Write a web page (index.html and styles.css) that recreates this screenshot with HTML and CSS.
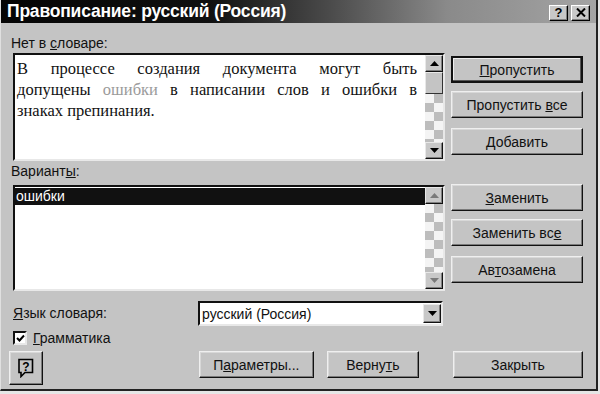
FILE: index.html
```html
<!DOCTYPE html>
<html lang="ru">
<head>
<meta charset="utf-8">
<title>Правописание</title>
<link rel="stylesheet" href="styles.css">
</head>
<body>
<div class="dialog">
  <div class="titlebar">
    <span class="title">Правописание: русский (Россия)</span>
    <div class="tb-btns">
      <span class="tb-btn">?</span>
      <span class="tb-btn tb-x">
        <svg width="10" height="9" viewBox="0 0 10 9"><path d="M1 0.5 L9 8.5 M9 0.5 L1 8.5" stroke="#000" stroke-width="2"/></svg>
      </span>
    </div>
  </div>
  <div class="body">
    <div class="main">
      <div class="left">
        <div class="label l1">Нет в <u>с</u>ловаре:</div>
        <div class="box textbox">
          <div class="text">
            <span class="line just">В процессе создания документа могут быть</span>
            <span class="line just">допущены <span class="err">ошибки</span> в написании слов и ошибки в</span>
            <span class="line">знаках препинания.</span>
          </div>
          <div class="scroll">
            <div class="sbtn"><svg width="9" height="5" viewBox="0 0 9 5"><path d="M4.5 0 L9 5 L0 5 Z" fill="#000"/></svg></div>
            <div class="thumb"></div>
            <div class="track"></div>
            <div class="sbtn"><svg width="9" height="5" viewBox="0 0 9 5"><path d="M0 0 L9 0 L4.5 5 Z" fill="#000"/></svg></div>
          </div>
        </div>
        <div class="label l2">Вариант<u>ы</u>:</div>
        <div class="box listbox">
          <div class="list">
            <div class="sel">ошибки</div>
          </div>
          <div class="scroll">
            <div class="sbtn dis"><svg width="9" height="5" viewBox="0 0 9 5"><path d="M4.5 0 L9 5 L0 5 Z" fill="#7a7a7a"/></svg></div>
            <div class="track"></div>
            <div class="sbtn dis"><svg width="9" height="5" viewBox="0 0 9 5"><path d="M0 0 L9 0 L4.5 5 Z" fill="#7a7a7a"/></svg></div>
          </div>
        </div>
      </div>
      <div class="right">
        <div class="btn default"><span><u>П</u>ропустить</span></div>
        <div class="btn g1"><span>Пропустить <u>в</u>се</span></div>
        <div class="btn g1b"><span><u>Д</u>обавить</span></div>
        <div class="btn g2"><span><u>З</u>аменить</span></div>
        <div class="btn g1"><span>Заменить вс<u>е</u></span></div>
        <div class="btn g3"><span>Ав<u>т</u>озамена</span></div>
      </div>
    </div>
    <div class="lang-row">
      <div class="label lang-label"><u>Я</u>зык словаря:</div>
      <div class="combo">
        <span class="combo-text">русский (Россия)</span>
        <div class="sbtn combo-btn"><svg width="9" height="5" viewBox="0 0 9 5"><path d="M0 0 L9 0 L4.5 5 Z" fill="#000"/></svg></div>
      </div>
    </div>
    <div class="check-row">
      <span class="checkbox"><svg width="9" height="9" viewBox="0 0 9 9"><path d="M1 4 L3.5 6.5 L8 1.5" stroke="#000" stroke-width="2" fill="none"/></svg></span>
      <span class="label"><u>Г</u>рамматика</span>
    </div>
    <div class="bottom-row">
      <div class="btn help">
        <svg width="18" height="20" viewBox="0 0 18 20">
          <path d="M2 1.5 H15.5 V14.5 H8 L4 18.5 V14.5 H2 Z" fill="none" stroke="#000" stroke-width="1.6"/>
          <text x="8.8" y="12.5" text-anchor="middle" font-family="Liberation Sans, sans-serif" font-weight="bold" font-size="12">?</text>
        </svg>
      </div>
      <div class="btn params"><span>П<u>а</u>раметры...</span></div>
      <div class="btn revert"><span>Верну<u>т</u>ь</span></div>
      <div class="btn close"><span>Закрыть</span></div>
    </div>
  </div>
</div>
</body>
</html>
```

FILE: styles.css
```css
* { box-sizing: border-box; }
html, body { margin: 0; padding: 0; }
body {
  width: 600px;
  height: 394px;
  background: #e6e6e6;
  font-family: "Liberation Sans", Arial, sans-serif;
  font-size: 14px;
  color: #111;
  overflow: hidden;
}
.dialog {
  width: 598px;
  height: 391px;
  background: #c4c4c4;
  border-right: 2px solid #222;
  border-bottom: 2px solid #222;
  border-left: 1px solid #e0e0e0;
  position: relative;
}
.titlebar {
  height: 23px;
  background: linear-gradient(to right, #050505 0%, #101010 35%, #4a4a4a 55%, #8a8a8a 75%, #a4a4a4 100%);
  display: flex;
  align-items: center;
  justify-content: space-between;
  padding: 0 6px 0 6px;
}
.title {
  color: #fff;
  font-weight: bold;
  font-size: 17.5px;
  letter-spacing: -0.2px;
}
.tb-btns { display: flex; gap: 3px; margin-top: 2px; }
.tb-btn {
  width: 19px;
  height: 16px;
  background: #c8c8c8;
  border: 1px solid;
  border-color: #fff #000 #000 #fff;
  box-shadow: inset -1px -1px #808080;
  display: flex;
  align-items: center;
  justify-content: center;
  font-weight: bold;
  font-size: 13px;
  line-height: 1;
  color: #000;
}
.body { padding: 0 13px 0 12px; }
.main { display: flex; justify-content: space-between; }
.left { width: 432px; display: flex; flex-direction: column; }
.label { font-size: 14px; line-height: 15px; white-space: nowrap; }
.l1 { margin-top: 13px; margin-left: -2px; }
.l2 { margin-top: 3px; margin-left: -2px; }
.box {
  background: #fff;
  border: 2px solid;
  border-color: #111 #e8e8e8 #e8e8e8 #111;
  display: flex;
}
.textbox { margin-top: 2px; height: 108px; }
.listbox { margin-top: 6px; height: 106px; }
.text {
  flex: 1;
  padding: 3px 8px 0 2px;
  font-family: "Liberation Serif", "Times New Roman", serif;
  font-size: 16.5px;
  line-height: 21px;
  color: #111;
}
.line { display: block; white-space: nowrap; }
.line.just { text-align: justify; text-align-last: justify; white-space: normal; }
.err { color: #9a9a9a; }
.list { flex: 1; padding-top: 1px; }
.sel {
  background: #111;
  color: #fff;
  height: 17px;
  line-height: 17px;
  padding-left: 1px;
  font-size: 14px;
}
.scroll {
  width: 18px;
  display: flex;
  flex-direction: column;
  background: #fff;
}
.sbtn {
  width: 18px;
  height: 17px;
  background: #c8c8c8;
  border: 1px solid;
  border-color: #e8e8e8 #111 #111 #e8e8e8;
  box-shadow: inset -1px -1px #808080;
  display: flex;
  align-items: center;
  justify-content: center;
}
.thumb {
  height: 22px;
  background: #c4c4c4;
  border: 1px solid;
  border-color: #e8e8e8 #333 #333 #e8e8e8;
}
.track {
  flex: 1;
  background-color: #fff;
  background-image: repeating-conic-gradient(#bdbdbd 0 25%, #f4f4f4 0 50%);
  background-size: 18px 18px;
}
.right { width: 132px; display: flex; flex-direction: column; padding-top: 33px; }
.btn {
  height: 27px;
  background: #c4c4c4;
  border: 1px solid;
  border-color: #efefef #111 #111 #efefef;
  box-shadow: inset -1px -1px #7a7a7a, inset 1px 1px #d8d8d8;
  display: flex;
  align-items: center;
  justify-content: center;
  font-size: 14px;
  white-space: nowrap;
}
.btn.default {
  border: 2px solid #111;
  box-shadow: inset -1px -1px #555, inset 1px 1px #eee;
}
.btn.g1 { margin-top: 8px; }
.btn.g1b { margin-top: 10px; }
.btn.g2 { margin-top: 29px; }
.btn.g3 { margin-top: 10px; }
.lang-row {
  display: flex;
  align-items: center;
  margin-top: 10px;
  height: 25px;
}
.lang-label { width: 185px; margin-left: 0; }
.combo {
  width: 245px;
  height: 25px;
  background: #fff;
  border: 2px solid;
  border-color: #111 #e8e8e8 #e8e8e8 #111;
  display: flex;
  align-items: center;
  justify-content: space-between;
}
.combo-text { padding-left: 2px; font-size: 14px; }
.combo-btn { height: 19px; margin-right: 0; }
.check-row {
  display: flex;
  align-items: center;
  gap: 6px;
  margin-top: 4px;
  height: 16px;
}
.checkbox {
  width: 14px;
  height: 14px;
  background: #fff;
  border: 2px solid;
  border-color: #111 #e8e8e8 #e8e8e8 #111;
  display: flex;
  align-items: center;
  justify-content: center;
}
.bottom-row {
  display: flex;
  align-items: flex-start;
  margin-top: 5px;
}
.btn.help {
  width: 34px;
  height: 34px;
  margin-left: -4px;
}
.btn.params { width: 117px; margin-left: 156px; margin-top: 0; }
.btn.revert { width: 93px; margin-left: 13px; margin-top: 0; }
.btn.close { width: 132px; margin-left: 34px; margin-top: 0; }
```
